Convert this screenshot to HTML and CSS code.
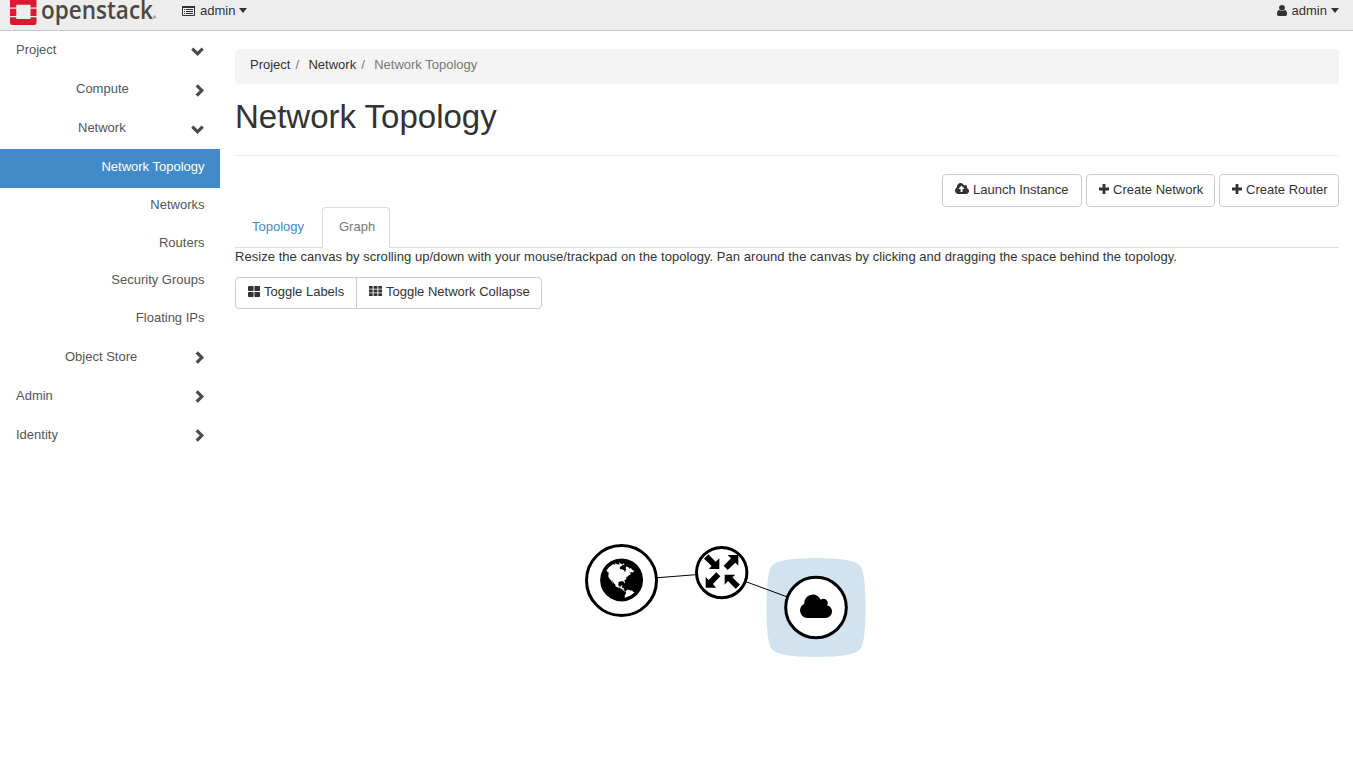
FILE: index.html
```html
<!DOCTYPE html>
<html lang="en">
<head>
<meta charset="utf-8">
<title>Network Topology - OpenStack Dashboard</title>
<link rel="stylesheet" href="styles.css">
</head>
<body>
<header class="topbar">
  <svg class="logo" width="152" height="30" viewBox="0 0 152 30">
    <g fill="#da1a32">
      <path d="M0 0H26.500V7.500H20.500V4.700H6.300V7.500H0Z"/>
      <path d="M0 8.700H6.300V16H0ZM20.500 8.700H26.500V16H20.500Z"/>
      <path d="M0 17.200H6.300V19H20.500V17.200H26.500V22.500Q26.500 25 24 25H2.500Q0 25 0 22.500Z"/>
    </g>
    <text class="wordmark" x="31" y="19" textLength="112" lengthAdjust="spacingAndGlyphs">openstack</text>
    <circle cx="144.500" cy="17" r="1.700" fill="#aaa"/>
  </svg>
  <a class="menu project-menu"><svg width="13" height="12" viewBox="0 0 13 12"><path fill="none" stroke="#333" d="M.5 1.500H12.500V10.500H.5Z"/><path fill="#333" d="M0 1H13V3H0ZM2 4h1v1H2zM2 6h1v1H2zM2 8h1v1H2zM4 4H11v1H4zM4 6H11v1H4zM4 8H11v1H4z"/></svg><span>admin</span><i class="caret"></i></a>
  <a class="menu user-menu"><svg width="10" height="11" viewBox="256 128 1280 1536" preserveAspectRatio="none"><path fill="#333" d="M1536 1399q0 109-62.500 187t-150.500 78h-854q-88 0-150.500-78t-62.500-187q0-85 8.500-160.500t31.500-152 58.500-131 94-89 134.500-34.500q131 128 313 128t313-128q76 0 134.500 34.500t94 89 58.500 131 31.500 152 8.500 160.500zm-256-887q0 159-112.500 271.500t-271.500 112.500-271.500-112.500-112.500-271.500 112.500-271.500 271.500-112.500 271.500 112.500 112.500 271.500z"/></svg><span>admin</span><i class="caret"></i></a>
</header>
<div class="layout">
  <nav class="sidebar">
    <a class="row"><span>Project</span><svg class="chev" width="13" height="9" viewBox="0 0 13 9"><path d="M1.300 1.700 6.500 6.800 11.700 1.700"/></svg></a>
    <a class="row sub compute"><span>Compute</span><svg class="chev right" width="9" height="13" viewBox="0 0 9 13"><path d="M1.700 1.300 6.800 6.500 1.700 11.700"/></svg></a>
    <a class="row sub network"><span>Network</span><svg class="chev" width="13" height="9" viewBox="0 0 13 9"><path d="M1.300 1.700 6.500 6.800 11.700 1.700"/></svg></a>
    <a class="leaf active">Network Topology</a>
    <a class="leaf">Networks</a>
    <a class="leaf">Routers</a>
    <a class="leaf">Security Groups</a>
    <a class="leaf">Floating IPs</a>
    <a class="row low store"><span>Object Store</span><svg class="chev right" width="9" height="13" viewBox="0 0 9 13"><path d="M1.700 1.300 6.800 6.500 1.700 11.700"/></svg></a>
    <a class="row low"><span>Admin</span><svg class="chev right" width="9" height="13" viewBox="0 0 9 13"><path d="M1.700 1.300 6.800 6.500 1.700 11.700"/></svg></a>
    <a class="row low"><span>Identity</span><svg class="chev right" width="9" height="13" viewBox="0 0 9 13"><path d="M1.700 1.300 6.800 6.500 1.700 11.700"/></svg></a>
  </nav>
  <main class="content">
    <div class="breadcrumb"><a>Project</a><i>/</i><a>Network</a><i>/</i><span>Network Topology</span></div>
    <h1>Network Topology</h1>
    <div class="actions">
      <button class="btn launch"><svg width="14" height="11" viewBox="0 128 1920 1408" preserveAspectRatio="none"><path fill="#333" d="M1280 864q0-14-9-23l-352-352q-9-9-23-9t-23 9l-351 351q-10 12-10 24 0 14 9 23t23 9h224v352q0 13 9.500 22.500t22.500 9.500h192q13 0 22.500-9.500t9.500-22.500v-352h224q13 0 22.500-9.500t9.500-22.500zm640 288q0 159-112.500 271.500t-271.500 112.500h-1088q-185 0-316.500-131.500t-131.500-316.500q0-130 70-240t188-165q-2-30-2-43 0-212 150-362t362-150q156 0 285.500 87t188.500 231q71-62 166-62 106 0 181 75t75 181q0 76-41 138 130 31 213.500 135.500t83.500 238.500z"/></svg><span>Launch Instance</span></button>
      <button class="btn create-net"><svg width="10" height="10" viewBox="0 0 10 10"><path fill="#333" d="M3.600 0H6.400V3.600H10V6.400H6.400V10H3.600V6.400H0V3.600H3.600Z"/></svg><span>Create Network</span></button>
      <button class="btn create-router"><svg width="10" height="10" viewBox="0 0 10 10"><path fill="#333" d="M3.600 0H6.400V3.600H10V6.400H6.400V10H3.600V6.400H0V3.600H3.600Z"/></svg><span>Create Router</span></button>
    </div>
    <div class="tabs"><a class="tab">Topology</a><a class="tab current">Graph</a></div>
    <p class="help">Resize the canvas by scrolling up/down with your mouse/trackpad on the topology. Pan around the canvas by clicking and dragging the space behind the topology.</p>
    <div class="group">
      <button class="btn labels"><svg width="12" height="11" viewBox="0 0 12 11"><g fill="#333"><rect width="5.600" height="5" rx=".8"/><rect x="6.400" width="5.600" height="5" rx=".8"/><rect y="6" width="5.600" height="5" rx=".8"/><rect x="6.400" y="6" width="5.600" height="5" rx=".8"/></g></svg><span>Toggle Labels</span></button>
      <button class="btn collapse"><svg width="13" height="10" viewBox="0 0 13 10"><path fill="#333" d="M0 0h3.700v2.800H0zM4.600 0h3.800v2.800H4.600zM9.300 0H13v2.800H9.300zM0 3.600h3.700v2.800H0zM4.600 3.600h3.800v2.800H4.600zM9.300 3.600H13v2.800H9.300zM0 7.200h3.700V10H0zM4.600 7.200h3.800V10H4.600zM9.300 7.200H13V10H9.300z"/></svg><span>Toggle Network Collapse</span></button>
    </div>
    <svg class="graph" width="1104" height="440" viewBox="235 320 1104 440">
      <path fill="#d2e3ef" d="M816 558Q856 558 861 567Q865.500 576 865.500 608Q865.500 640 861 648Q856 657 816 657Q776 657 771 648Q766.500 640 766.500 608Q766.500 576 771 567Q776 558 816 558Z"/>
      <path fill="none" stroke="#000" d="M621.500 580.500 721.500 572.700 816 607.500"/>
      <g fill="#fff" stroke="#000" stroke-width="3">
        <circle cx="621.500" cy="580.500" r="35"/><circle cx="721.700" cy="572.600" r="25.200"/><circle cx="816" cy="607.500" r="30.300"/>
      </g>
      <path transform="translate(596.500 554.900) scale(.028)" d="M896 128q209 0 385.500 103t279.500 279.500 103 385.500-103 385.500-279.500 279.500-385.500 103-385.500-103-279.500-279.500-103-385.500 103-385.500 279.500-279.500 385.500-103zm274 521q-2 1-9.500 9.500t-13.500 9.500q2 0 4.500-5t5-11 3.500-7q6-7 22-15 14-6 52-12 34-8 51 11-2-2 9.500-13t14.500-12q3-2 15-4.500t15-7.500l2-22q-12 1-17.500-7t-6.500-21q0 2-6 8 0-7-4.500-8t-11.500 1-9 1q-10-3-15-7.500t-8-16.500-4-15q-2-5-9.500-11t-9.500-10q-1-2-2.500-5.500t-3-6.500-4-5.500-5.500-2.500-7 5-7.500 10-4.500 5q-3-2-6-1.500t-4.500 1-4.500 3-5 3.500q-3 2-8.500 3t-8.500 2q15-5-1-11-10-4-16-3 9-4 7.500-12t-8.500-14h5q-1-4-8.500-8.500t-17.500-8.500-13-6q-8-5-34-9.500t-33-.5q-5 6-4.500 10.500t4 14 3.500 12.500q1 6-5.500 13t-6.500 12q0 7 14 15.500t10 21.500q-3 8-16 16t-16 12q-5 8-1.500 18.500t10.500 16.500q2 2 1.500 4t-3.500 4.500-5.500 4-6.500 3.500l-3 2q-11 5-20.500-6t-13.500-26q-7-25-16-30-23-8-29 1-5-13-41-26-25-9-58-4 6-1 0-15-7-15-19-12 3-6 4-17.500t1-13.500q3-13 12-23 1-1 7-8.500t9.500-13.500.5-6q35 4 50-11 5-5 11.500-17t10.500-17q9-6 14-5.500t14.500 5.500 14.500 5q14 1 15.500-11t-7.500-20q12 1 3-17-4-7-8-9-12-4-27 5-8 4 2 8-1-1-9.500 10.500t-16.500 17.500-16-5q-1-1-5.500-13.500t-9.500-13.500q-8 0-16 15 3-8-11-15t-24-8q19-12-8-27-7-4-20.500-5t-19.500 4q-5 7-5.500 11.500t5 8 10.500 5.500 11.500 4 8.500 3q14 10 8 14-2 1-8.500 3.500t-11.500 4.500-6 4q-3 4 0 14t-2 14q-5-5-9-17.500t-7-16.500q7 9-25 6l-10-1q-4 0-16 2t-20.500 1-13.500-8q-4-8 0-20 1-4 4-2-4-3-11-9.500t-10-8.500q-46 15-94 41 6 1 12-1 5-2 13-6.500t10-5.500q34-14 42-7l5-5q14 16 20 25-7-4-30-1-20 6-22 12 7 12 5 18-4-3-11.500-10t-14.500-11-15-5q-16 0-22 1-146 80-235 222 7 7 12 8 4 1 5 9t2.500 11 11.500-3q9 8 3 19 1-1 44 27 19 17 21 21 3 11-10 18-1-2-9-9t-9-4q-3 5 .5 18.500t10.500 12.500q-7 0-9.500 16t-2.500 35.500-1 23.500l2 1q-3 12 5.500 34.500t21.500 19.500q-13 3 20 43 6 8 8 9 3 2 12 7.500t15 10 10 10.500q4 5 10 22.500t14 23.500q-2 6 9.500 20t10.500 23q-1 0-2.500 1t-2.500 1q3 7 15.500 14t15.500 13q1 3 2 10t3 11 8 2q2-20-24-62-15-25-17-29-3-5-5.500-15.500t-4.500-14.500q2 0 6 1.500t8.500 3.500 7.500 4 2 3q-3 7 2 17.500t12 18.500 17 19 12 13q6 6 14 19.500t0 13.500q9 0 20 10t17 20q5 8 8 26t5 24q2 7 8.500 13.500t12.500 9.500l16 8 13 7q5 2 18.500 10.500t21.500 11.500q10 4 16 4t14.500-2.500 13.500-3.500q15-2 29 15t21 21q36 19 55 11-2 1 .5 7.500t8 15.500 9 14.500 5.500 8.500q5 6 18 15t18 15q6-4 7-9-3 8 7 20t18 10q14-3 14-32-31 15-49-18 0-1-2.500-5.500t-4-8.500-2.500-8.500 0-7.500 5-3q9 0 10-3.500t-2-12.500-4-13q-1-8-11-20t-12-15q-5 9-16 8t-16-9q0 1-1.500 5.500t-1.500 6.500q-13 0-15-1 1-3 2.500-17.500t3.500-22.500q1-4 5.500-12t7.500-14.500 4-12.500-4.500-9.500-17.500-2.500q-19 1-26 20-1 3-3 10.500t-5 11.500-9 7q-7 3-24 2t-24-5q-13-8-22.500-29t-9.500-37q0-10 2.500-26.500t3-25-5.500-24.500q3-2 9-9.500t10-10.500q2-1 4.500-1.500t4.500 0 4-1.500 3-6q-1-1-4-3-3-3-4-3 7 3 28.500-1.500t27.500 1.500q15 11 22-2 0-1-2.500-9.500t-.5-13.500q5 27 29 9 3 3 15.500 5t17.500 5q3 2 7 5.500t5.500 4.500 5-.5 8.500-6.500q10 14 12 24 11 40 19 44 7 3 11 2t4.500-9.500 0-14-1.500-12.500l-1-8v-18l-1-8q-15-3-18.500-12t1.500-18.500 15-18.500q1-1 8-3.500t15.500-6.500 12.500-8q21-19 15-35 7 0 11-9-1 0-5-3t-7.500-5-4.500-2q9-5 2-16 5-3 7.500-11t7.500-10q9 12 21 2 7-8 1-16 5-7 20.500-10.500t18.500-9.500q7 2 8-2t1-12 3-12q4-5 15-9t13-5l17-11q3-4 0-4 18 2 31-11 10-11-6-20 3-6-3-9.500t-15-5.500q3-1 11.500-.5t10.500-1.500q15-10-7-16-17-5-43 12zm-163 877q206-36 351-189-3-3-12.500-4.500t-12.500-3.500q-18-7-24-8 1-7-2.500-13t-8-9-12.500-8-11-7q-2-2-7-6t-7-5.500-7.500-4.500-8.500-2-10 1l-3 1q-3 1-5.500 2.500t-5.500 3-4 3 0 2.500q-21-17-36-22-5-1-11-5.500t-10.500-7-10-1.500-11.500 7q-5 5-6 15t-2 13q-7-5 0-17.500t2-18.500q-3-6-10.500-4.500t-12 4.500-11.500 8.500-9 6.500-8.500 5.500-8.500 7.500q-3 4-6 12t-5 11q-2-4-11.500-6.500t-9.500-5.500q2 10 4 35t5 38q7 31-12 48-27 25-29 40-4 22 12 26 0 7-8 20.500t-7 21.500q0 6 2 16z"/>
      <path transform="translate(685 535) scale(.3333)" d="M57 71 70 58 92 80 103 70V102H72L80 93ZM128 60H160V92L151 83 128 105 116 92 138 70ZM62 126 71 135 94 112 106 124 84 147 93 158H62ZM119 119H151L142 127 165 149 152 161 129 138 119 149Z"/>
      <path transform="translate(800 592.300) scale(.01667)" d="M1920 1152q0 159-112.500 271.500t-271.500 112.500h-1088q-185 0-316.500-131.500t-131.500-316.500q0-132 71-241.500t187-163.500q-2-28-2-43 0-212 150-362t362-150q158 0 286.500 88t187.500 230q70-62 166-62 106 0 181 75t75 181q0 75-41 138 129 30 213 134.500t84 239.500z"/>
    </svg>
  </main>
</div>
</body>
</html>
```
FILE: styles.css
```css
* { box-sizing: border-box; }
body {
  margin: 0;
  height: 760px;
  overflow: hidden;
  background: #fff;
  color: #333;
  font: 13px/18px "Liberation Sans", Arial, sans-serif;
}
.topbar {
  display: flex;
  height: 31px;
  padding: 0 14px 0 10px;
  background: #ededed;
  border-bottom: 1px solid #c8c8c8;
}
.logo { flex: none; overflow: visible; }
.wordmark { font: 600 25px "Open Sans", sans-serif; fill: #4f4843; }
.menu { display: flex; align-items: center; height: 21px; }
.menu span { margin: 0 4px 0 5px; }
.project-menu { margin-left: 20px; }
.user-menu { margin-left: auto; }
.caret { border: 4px solid transparent; border-top: 5px solid #333; border-bottom: 0; }
.layout { display: flex; }
.sidebar { width: 220px; flex: none; padding-top: 1px; color: #555; }
.row {
  display: flex;
  justify-content: space-between;
  height: 39px;
  padding: 9px 16px 0;
}
.low { padding-top: 10px; }
.chev { margin-top: 6px; overflow: visible; }
.chev.right { margin-top: 4px; }
.low .chev.right { margin-top: 3px; }
.chev path { fill: none; stroke: #4a4a4a; stroke-width: 3.200; }
.compute { padding-left: 76px; }
.network { padding-left: 78px; }
.store { padding-left: 65px; }
.leaf { display: block; height: 37.500px; padding: 8px 15.500px 0; text-align: right; }
.leaf.active { height: 39px; padding-top: 9px; background: #428bca; color: #fff; }
.content { width: 1104px; margin-left: 15px; padding-top: 18px; }
.breadcrumb { display: flex; height: 35px; padding: 7px 15px; border-radius: 4px; background: #f4f4f4; }
.breadcrumb i { width: 18px; padding-left: 5px; color: #777; font-style: normal; }
.breadcrumb span { color: #777; }
h1 {
  height: 72px;
  margin: 0 0 18px;
  padding-top: 14px;
  border-bottom: 1px solid #eee;
  font-size: 33px;
  font-weight: 400;
  line-height: 38px;
}
.actions { display: flex; justify-content: flex-end; gap: 4px; height: 33px; }
.btn {
  display: flex;
  align-items: center;
  gap: 4px;
  height: 33px;
  padding: 0 0 2px 12px;
  border: 1px solid #ccc;
  border-radius: 4px;
  background: #fff;
  color: #333;
  font: inherit;
  white-space: nowrap;
}
.btn svg { position: relative; top: -1px; }
.launch { width: 140px; }
.create-net { width: 129px; }
.create-router { width: 120px; }
.tabs { display: flex; height: 41px; border-bottom: 1px solid #ddd; }
.tab { width: 87px; height: 41px; padding: 11px 17px; color: #428bca; }
.current {
  width: 68px;
  padding: 10px 16px;
  border: 1px solid #ddd;
  border-bottom-color: #fff;
  border-radius: 4px 4px 0 0;
  background: #fff;
  color: #777;
}
.help { margin: 0 0 11px; white-space: nowrap; letter-spacing: .046px; }
.group { display: flex; height: 32px; margin-bottom: 11px; }
.group .btn { height: 32px; }
.labels { width: 122px; border-radius: 4px 0 0 4px; }
.collapse { width: 186px; margin-left: -1px; border-radius: 0 4px 4px 0; }
.graph { display: block; }
```
